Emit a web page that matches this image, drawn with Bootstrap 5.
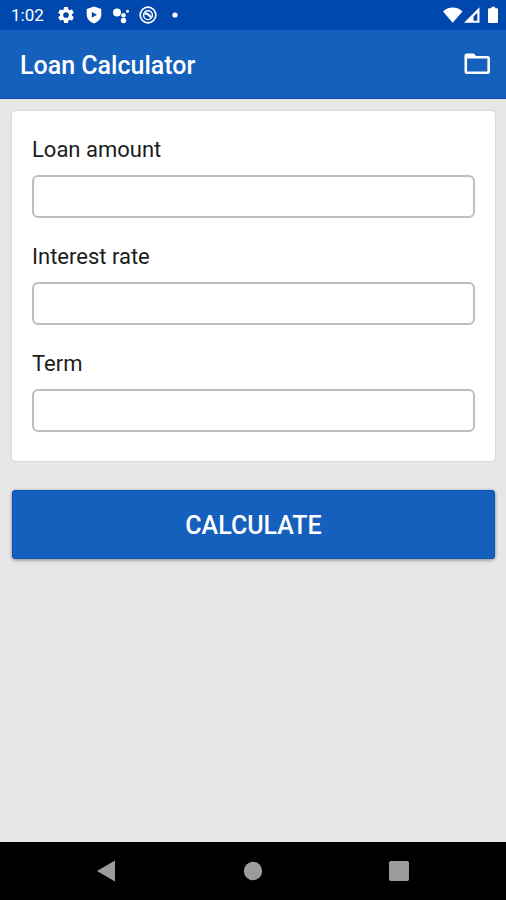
<!DOCTYPE html>
<html lang="en">
<head>
<meta charset="utf-8">
<meta name="viewport" content="width=device-width, initial-scale=1">
<title>Loan Calculator</title>
<link href="https://cdn.jsdelivr.net/npm/bootstrap@5.3.0/dist/css/bootstrap.min.css" rel="stylesheet">
<style>
  body { font-family: Roboto, "Liberation Sans", sans-serif; background: #e7e7e7; color: #1c1c1c; }
  svg { display: block; flex: none; }
  .status-strip { background: #0047ae; height: 30px; padding: 0 8px 0 11px; font-size: 17px; line-height: 32px; }
  .status-strip .clock { margin-right: 12px; }
  .status-icons { gap: 9px; }
  .app-header { background: #1560bd; height: 69px; padding: 0 14px 0 20px; border-bottom: 1px solid #0a4fb0; }
  .app-header h1 { font-size: 25px; line-height: 32px; font-weight: 500; padding-top: 3px; }
  .loan-form { padding: 12px 11px 0 12px; }
  .loan-card { padding: 24px 20px 29px; border-radius: 4px; box-shadow: 0 0 2px rgba(0,0,0,.2); gap: 24px; }
  .loan-card .form-label { font-size: 22px; line-height: 30px; margin-bottom: 10px; }
  .loan-card .form-control { height: 43px; border: 2px solid #bebebe; border-radius: 6px; font-size: 20px; }
  .btn-calc { --bs-btn-color: #fff; --bs-btn-bg: #1560bd; --bs-btn-hover-color: #fff; --bs-btn-hover-bg: #0f55ad; --bs-btn-active-color: #fff; --bs-btn-active-bg: #0047ae;
    margin-top: 29px; height: 69px; padding: 8px 12px 6px; border: 0; border-radius: 4px; font-size: 25px; font-weight: 500; box-shadow: inset 0 0 0 1px #0b55b5, 0 1px 3px 1px rgba(0,0,0,.28); }
  .system-nav { background: #000; height: 58px; padding: 0 55px 0 54px; }
  .system-nav .btn { --bs-btn-padding-x: 42px; --bs-btn-padding-y: 10px; border: 0; }
</style>
<script defer src="https://cdn.jsdelivr.net/npm/bootstrap@5.3.0/dist/js/bootstrap.bundle.min.js"></script>
</head>
<body class="d-flex flex-column min-vh-100">
  <div class="status-strip d-flex align-items-center text-white">
    <span class="clock">1:02</span>
    <div class="status-icons d-flex align-items-center">
      <svg width="20" height="20" viewBox="0 0 24 24" fill="#fff" aria-hidden="true"><path d="M19.14 12.94c.04-.3.06-.61.06-.94s-.02-.64-.07-.94l2.03-1.58a.49.49 0 0 0 .12-.61l-1.92-3.32a.49.49 0 0 0-.59-.22l-2.39.96a7 7 0 0 0-1.62-.94l-.36-2.54a.48.48 0 0 0-.48-.41h-3.84a.47.47 0 0 0-.47.41l-.36 2.54c-.59.24-1.13.57-1.62.94l-2.39-.96a.48.48 0 0 0-.59.22L2.74 8.87a.47.47 0 0 0 .12.61l2.03 1.58a6 6 0 0 0 0 1.88l-2.03 1.58a.49.49 0 0 0-.12.61l1.92 3.32c.12.22.37.29.59.22l2.39-.96c.5.38 1.03.7 1.62.94l.36 2.54c.05.24.24.41.48.41h3.84c.24 0 .44-.17.47-.41l.36-2.54a7 7 0 0 0 1.62-.94l2.39.96c.22.08.47 0 .59-.22l1.92-3.32a.47.47 0 0 0-.12-.61zM12 15.4a3.4 3.4 0 1 1 0-6.8 3.4 3.4 0 0 1 0 6.8z"/></svg>
      <svg width="18" height="20" viewBox="0 0 18 20" fill="#fff" aria-hidden="true"><path fill-rule="evenodd" d="M9 1.500 16.300 4v5.500c0 4.200-3 7.300-7.300 9-4.300-1.700-7.300-4.800-7.300-9V4zM6.800 6.900v5.800L12 9.800z"/></svg>
      <svg width="18" height="20" viewBox="0 0 18 20" fill="#fff" aria-hidden="true"><circle cx="5" cy="7.500" r="4"/><circle cx="11.500" cy="10.200" r="2.300"/><circle cx="15.500" cy="6.300" r="1.500"/><circle cx="11.500" cy="15.500" r="2.700"/></svg>
      <svg width="18" height="20" viewBox="0 0 18 20" fill="none" stroke="#fff" aria-hidden="true"><circle cx="9" cy="10" r="7.800" stroke-width="1.700"/><circle cx="9" cy="10.200" r="4.400" stroke-width="1.400"/><path stroke-width="2.200" d="M5.500 8.300Q9.500 8.300 12 12.500"/></svg>
      <svg width="18" height="20" viewBox="0 0 18 20" fill="#fff" aria-hidden="true"><circle cx="9" cy="10" r="2.600"/></svg>
    </div>
    <div class="d-flex align-items-center ms-auto">
      <svg width="56" height="20" viewBox="0 0 56 20" fill="#fff" aria-hidden="true"><path d="M1 6.500C6 1.200 15.500 1.200 20.500 6.500L10.700 17.700z"/><path fill-rule="evenodd" d="M37.500 2.300V17.700H22zM35.300 7.800 31.500 11.600V15.700H35.300z"/><path d="M47.500 3.300H49.500V1.700H53V3.300H55q1 0 1 1V17q0 1-1 1H47q-1 0-1-1V4.300q0-1 1-1z"/></svg>
    </div>
  </div>
  <header class="app-header d-flex align-items-center justify-content-between text-white">
    <h1 class="mb-0">Loan Calculator</h1>
    <button class="btn p-0 border-0" type="button" aria-label="Open saved loans">
      <svg width="30" height="26" viewBox="0 0 30 26" fill="none" stroke="#fff" stroke-width="2.600" stroke-linejoin="round" aria-hidden="true"><path d="M3.800 7V20.500q0 1.200 1.200 1.200H25.500q1.200 0 1.200-1.200V7.500q0-1.200-1.200-1.200H3.800z"/><path fill="#fff" stroke-width="1.500" d="M3.300 6.200V4.500q0-1.300 1.300-1.300H11.500L14.300 6.200z"/></svg>
    </button>
  </header>
  <main class="flex-grow-1">
    <form class="loan-form">
      <div class="loan-card bg-white d-flex flex-column">
        <div><label class="form-label d-block" for="amount">Loan amount</label><input class="form-control" id="amount" type="text" inputmode="decimal"></div>
        <div><label class="form-label d-block" for="rate">Interest rate</label><input class="form-control" id="rate" type="text" inputmode="decimal"></div>
        <div><label class="form-label d-block" for="term">Term</label><input class="form-control" id="term" type="text" inputmode="numeric"></div>
      </div>
      <button class="btn btn-calc w-100" type="button">CALCULATE</button>
    </form>
  </main>
  <nav class="system-nav d-flex align-items-center justify-content-between" aria-label="System">
    <button class="btn" type="button" aria-label="Back"><svg width="20" height="22" viewBox="0 0 20 22" fill="#9c9c9c" aria-hidden="true"><path d="M1 11 19 .500V21.500z"/></svg></button>
    <button class="btn" type="button" aria-label="Home"><svg width="20" height="22" viewBox="0 0 20 22" fill="#9c9c9c" aria-hidden="true"><circle cx="10" cy="11" r="9.200"/></svg></button>
    <button class="btn" type="button" aria-label="Recent apps"><svg width="20" height="22" viewBox="0 0 20 22" fill="#9c9c9c" aria-hidden="true"><rect y="1" width="20" height="20" rx="2"/></svg></button>
  </nav>
</body>
</html>
